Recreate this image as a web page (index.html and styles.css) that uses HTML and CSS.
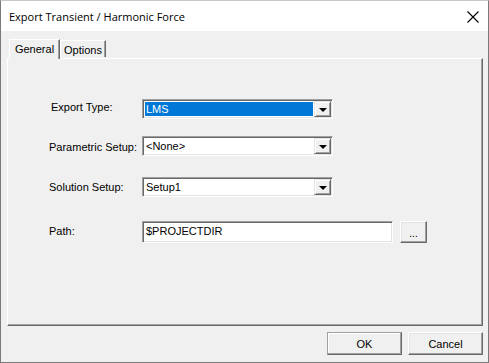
FILE: index.html
```html
<!DOCTYPE html>
<html>
<head>
<meta charset="utf-8">
<link rel="stylesheet" href="styles.css">
</head>
<body>
<div class="window">
  <div class="titlebar">
    <span class="title">Export Transient / Harmonic Force</span>
    <svg class="close" width="12" height="12" viewBox="0 0 12 12"><path d="M0.5 0.5 L11.5 11.5 M11.5 0.5 L0.5 11.5" stroke="#000" stroke-width="1.1" fill="none"/></svg>
  </div>
  <div class="client">
    <div class="tabs">
      <div class="tab tab-active">General</div>
      <div class="tab">Options</div>
    </div>
    <div class="panel">
      <div class="row row-export">
        <span class="label label-export">Export Type:</span>
        <div class="combo">
          <div class="combo-value combo-selected">LMS</div>
          <div class="combo-btn"><span class="arrow"></span></div>
        </div>
      </div>
      <div class="row row-param">
        <span class="label">Parametric Setup:</span>
        <div class="combo">
          <div class="combo-value">&lt;None&gt;</div>
          <div class="combo-btn"><span class="arrow"></span></div>
        </div>
      </div>
      <div class="row row-solution">
        <span class="label">Solution Setup:</span>
        <div class="combo">
          <div class="combo-value">Setup1</div>
          <div class="combo-btn"><span class="arrow"></span></div>
        </div>
      </div>
      <div class="row row-path">
        <span class="label">Path:</span>
        <div class="textbox">$PROJECTDIR</div>
        <div class="button button-browse">...</div>
      </div>
    </div>
    <div class="footer">
      <div class="button button-dialog button-default">OK</div>
      <div class="button button-dialog">Cancel</div>
    </div>
  </div>
</div>
</body>
</html>
```
FILE: styles.css
```css
html, body {
  margin: 0;
  padding: 0;
  width: 489px;
  height: 363px;
  overflow: hidden;
  background: #3a4a48;
}
.window {
  box-sizing: border-box;
  width: 489px;
  height: 363px;
  border: 1px solid #7a7a7a;
  border-top: 1px solid #c8c8c8;
  display: flex;
  flex-direction: column;
  background: #f0f0f0;
  font-family: "Liberation Sans", Arial, sans-serif;
  font-size: 11px;
  color: #000;
}
.titlebar {
  height: 30px;
  background: #fff;
  display: flex;
  align-items: center;
  justify-content: space-between;
  padding: 0 9px 0 8px;
  flex: none;
}
.title {
  font-family: "Open Sans", "Noto Sans", sans-serif;
  font-size: 11px;
  color: #000;
  margin-top: 0px;
}
.close {
  display: block;
  margin-top: 1px;
}
.client {
  flex: 1;
  display: flex;
  flex-direction: column;
  padding: 8px 5px 0 6px;
}
.tabs {
  display: flex;
  align-items: flex-end;
  height: 19px;
  padding-left: 2px;
  position: relative;
  z-index: 1;
}
.tab {
  box-sizing: border-box;
  height: 17px;
  padding: 0 4px 0 4px;
  border-left: 1px solid #fff;
  border-top: 1px solid #fff;
  border-right: 1px solid #696969;
  box-shadow: inset -1px 0 0 #a0a0a0;
  display: flex;
  align-items: center;
  font-size: 11px;
  margin-bottom: 1px;
}
.tab-active {
  height: 20px;
  margin-bottom: -1px;
  background: #f0f0f0;
  padding: 0 6px 2px 6px;
  width: 51px;
  justify-content: center;
}
.tab + .tab {
  width: 46px;
  justify-content: center;
  padding-top: 2px;
}
.panel {
  box-sizing: border-box;
  height: 268px;
  border-left: 1px solid #fff;
  border-top: 1px solid #fff;
  border-right: 1px solid #696969;
  border-bottom: 1px solid #696969;
  box-shadow: inset -1px -1px 0 #a0a0a0;
  padding: 40px 0 0 41px;
  display: flex;
  flex-direction: column;
}
.row {
  display: flex;
  align-items: center;
  height: 20px;
}
.row-param { margin-top: 17px; }
.row-solution { margin-top: 21px; }
.row-path { margin-top: 24px; height: 22px; }
.label {
  width: 93px;
  flex: none;
}
.label-export {
  padding-left: 2px;
  width: 91px;
  margin-top: -5px;
}
.row-param .label { margin-top: 1px; }
.row-path .label { margin-top: -2px; }
.combo {
  box-sizing: border-box;
  width: 191px;
  height: 20px;
  background: #fff;
  border-top: 1px solid #a0a0a0;
  border-left: 1px solid #a0a0a0;
  border-right: 1px solid #fff;
  border-bottom: 1px solid #fff;
  box-shadow: inset 1px 1px 0 #696969, inset -1px -1px 0 #e3e3e3;
  display: flex;
  padding: 1px 1px 1px 1px;
}
.combo-value {
  flex: 1;
  margin: 1px 1px 1px 1px;
  padding-left: 1px;
  display: flex;
  align-items: center;
  white-space: nowrap;
}
.combo-selected {
  background: #0078d7;
  color: #fff;
}
.combo-btn {
  box-sizing: border-box;
  width: 17px;
  flex: none;
  background: #f0f0f0;
  border-top: 1px solid #e3e3e3;
  border-left: 1px solid #e3e3e3;
  border-right: 1px solid #696969;
  border-bottom: 1px solid #696969;
  box-shadow: inset 1px 1px 0 #fff, inset -1px -1px 0 #a0a0a0;
  display: flex;
  align-items: center;
  justify-content: center;
}
.arrow {
  width: 0;
  height: 0;
  border-left: 4px solid transparent;
  border-right: 4px solid transparent;
  border-top: 4px solid #000;
  margin-top: 1px;
}
.textbox {
  box-sizing: border-box;
  width: 251px;
  height: 22px;
  background: #fff;
  border-top: 1px solid #a0a0a0;
  border-left: 1px solid #a0a0a0;
  border-right: 1px solid #fff;
  border-bottom: 1px solid #fff;
  box-shadow: inset 1px 1px 0 #696969, inset -1px -1px 0 #e3e3e3;
  padding: 0 0 2px 3px;
  display: flex;
  align-items: center;
}
.button {
  box-sizing: border-box;
  background: #f0f0f0;
  border-top: 1px solid #fff;
  border-left: 1px solid #fff;
  border-right: 1px solid #696969;
  border-bottom: 1px solid #696969;
  box-shadow: inset -1px -1px 0 #a0a0a0, inset 1px 1px 0 #e3e3e3;
  display: flex;
  align-items: center;
  justify-content: center;
}
.button-browse {
  width: 27px;
  height: 22px;
  margin-left: 7px;
  padding-top: 3px;
  font-size: 10px;
}
.footer {
  display: flex;
  justify-content: flex-end;
  gap: 6px;
  margin-top: 6px;
}
.button-dialog {
  width: 75px;
  height: 23px;
  font-size: 11px;
}
.button-default {
  border: 1px solid #696969;
  border-top-color: #a0a0a0;
  border-left-color: #a0a0a0;
  box-shadow: inset -1px -1px 0 #a0a0a0, inset 1px 1px 0 #fff;
}
```
